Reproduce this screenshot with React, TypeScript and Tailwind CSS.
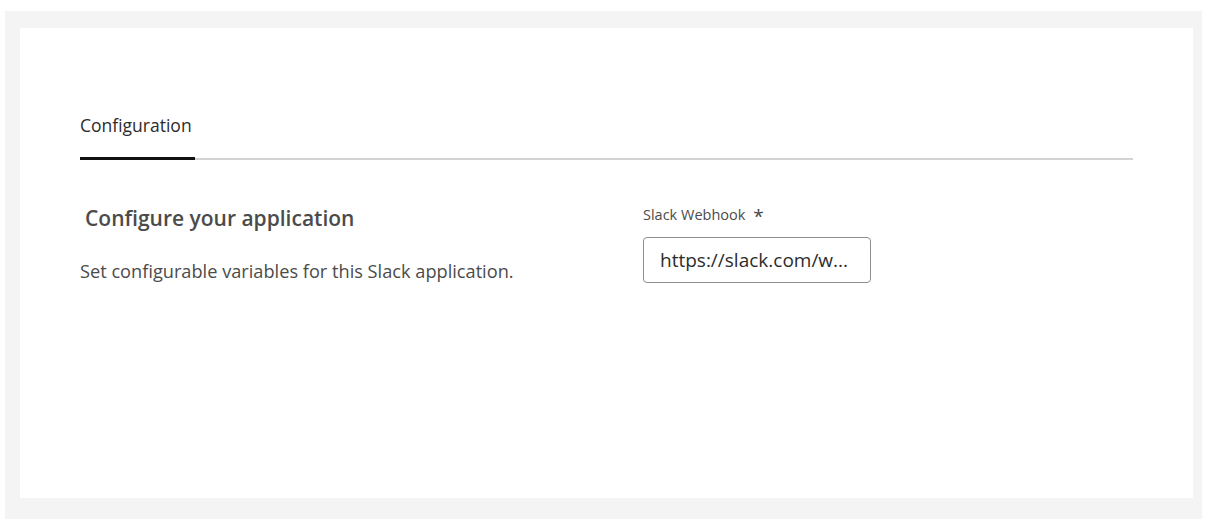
export default function App() {
  return (
    <div className="w-[1210px] h-[527px] bg-white pt-[11px] pl-[5px]" style={{ fontFamily: '"Open Sans", "Noto Sans", sans-serif' }}>
      <div className="w-[1197px] h-[508px] bg-[#f4f4f4] pt-[17px] pl-[15px]">
        <div className="w-[1173px] h-[470px] bg-white pl-[60px] pr-[60px] pt-[85px]">
          <div className="flex flex-col">
            <div className="text-[17.5px] text-[#2c2c2c] leading-[24px] pb-[20px] w-[115px]">Configuration</div>
            <div className="flex h-[3px]">
              <div className="w-[115px] h-[3px] bg-[#111]" />
              <div className="flex-1 h-[2px] mt-[1px] bg-[#d3d3d3]" />
            </div>
          </div>
          <div className="flex mt-[43px]">
            <div className="w-[563px]">
              <div className="text-[21px] font-semibold text-[#4b4b4b] leading-[28px] pl-[5px] mt-[1px]">Configure your application</div>
              <div className="text-[18.2px] text-[#4b4b4b] leading-[26px] mt-[26px]">Set configurable variables for this Slack application.</div>
            </div>
            <div className="flex flex-col">
              <div className="text-[14.5px] text-[#4b4b4b] leading-[20px] flex items-center gap-[8px]">
                Slack Webhook <span className="text-[19px] leading-[20px] text-[#464646] mt-[3px]">*</span>
              </div>
              <div className="mt-[11px] w-[228px] h-[46px] border border-[#8e8e8e] rounded-[4px] flex items-center pl-[16px] text-[19px] text-[#2c2c2c]">
                https://slack.com/w...
              </div>
            </div>
          </div>
        </div>
      </div>
    </div>
  );
}
